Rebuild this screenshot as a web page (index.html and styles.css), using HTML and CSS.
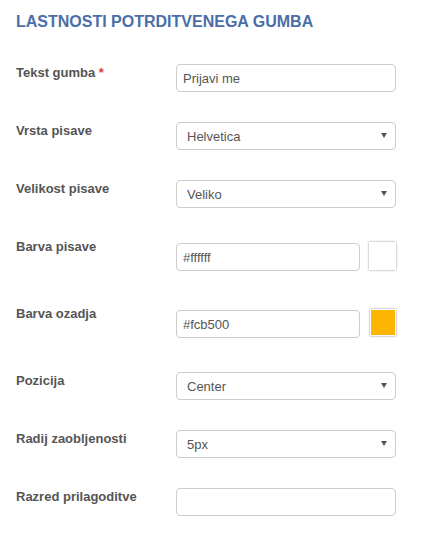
FILE: index.html
```html
<!DOCTYPE html>
<html lang="sl">
<head>
  <meta charset="UTF-8">
  <title>Lastnosti potrditvenega gumba</title>
  <link rel="stylesheet" href="styles.css">
</head>
<body>
  <div class="panel">
    <h2>Lastnosti potrditvenega gumba</h2>

    <form class="nastavitve">
      <div class="vrstica">
        <label>Tekst gumba <span class="obvezno">*</span></label>
        <input type="text" class="polje" value="Prijavi me">
      </div>

      <div class="vrstica">
        <label>Vrsta pisave</label>
        <div class="izbira">
          <select class="polje">
            <option>Helvetica</option>
          </select>
        </div>
      </div>

      <div class="vrstica">
        <label>Velikost pisave</label>
        <div class="izbira">
          <select class="polje">
            <option>Veliko</option>
          </select>
        </div>
      </div>

      <div class="vrstica barvna prva">
        <label>Barva pisave</label>
        <input type="text" class="polje kratko" value="#ffffff">
        <span class="vzorec"></span>
      </div>

      <div class="vrstica barvna druga">
        <label>Barva ozadja</label>
        <input type="text" class="polje kratko" value="#fcb500">
        <span class="vzorec oranzna"></span>
      </div>

      <div class="vrstica po-barvah">
        <label>Pozicija</label>
        <div class="izbira">
          <select class="polje">
            <option>Center</option>
          </select>
        </div>
      </div>

      <div class="vrstica">
        <label>Radij zaobljenosti</label>
        <div class="izbira">
          <select class="polje">
            <option>5px</option>
          </select>
        </div>
      </div>

      <div class="vrstica">
        <label>Razred prilagoditve</label>
        <input type="text" class="polje" value="">
      </div>
    </form>
  </div>
</body>
</html>
```

FILE: styles.css
```css
body {
  margin: 0;
  background: #fff;
  font-family: "Liberation Sans", Arial, Helvetica, sans-serif;
  color: #555;
}

.panel {
  padding: 12px 16px;
}

h2 {
  margin: 0 0 32px;
  font-size: 16px;
  line-height: 20px;
  font-weight: bold;
  text-transform: uppercase;
  color: #4a6ea8;
}

.vrstica {
  display: flex;
  align-items: flex-start;
  margin-bottom: 30px;
}

.vrstica label {
  width: 160px;
  flex: none;
  font-size: 13px;
  line-height: 18px;
  font-weight: bold;
  color: #555;
}

.obvezno {
  color: #e23c3c;
}

.polje {
  box-sizing: border-box;
  width: 220px;
  height: 28px;
  margin: 0;
  padding: 0 6px;
  border: 1px solid #ccc;
  border-radius: 4px;
  background: #fff;
  font-family: inherit;
  font-size: 13px;
  color: #555;
  outline: none;
}

.izbira {
  position: relative;
}

.izbira select {
  -webkit-appearance: none;
  appearance: none;
  padding-left: 10px;
}

.izbira::after {
  content: "";
  position: absolute;
  right: 9px;
  top: 11px;
  border-left: 3px solid transparent;
  border-right: 3px solid transparent;
  border-top: 5px solid #555;
  pointer-events: none;
}

.vrstica.barvna label {
  margin-top: -4px;
}

.vrstica.prva {
  margin-top: 34px;
}

.vrstica.druga {
  margin-top: 38px;
}

.vrstica.po-barvah {
  margin-top: 34px;
}

.barvna .kratko {
  width: 184px;
  margin-top: 1px;
}

.vzorec {
  box-sizing: border-box;
  width: 27px;
  height: 28px;
  margin-left: 9px;
  border: 1px solid #fff;
  background: #fff;
  box-shadow: 0 0 2px rgba(0, 0, 0, 0.45);
}

.vzorec.oranzna {
  width: 26px;
  height: 27px;
  margin-left: 10px;
  border-width: 1px;
  background: #fcb500;
}
```
